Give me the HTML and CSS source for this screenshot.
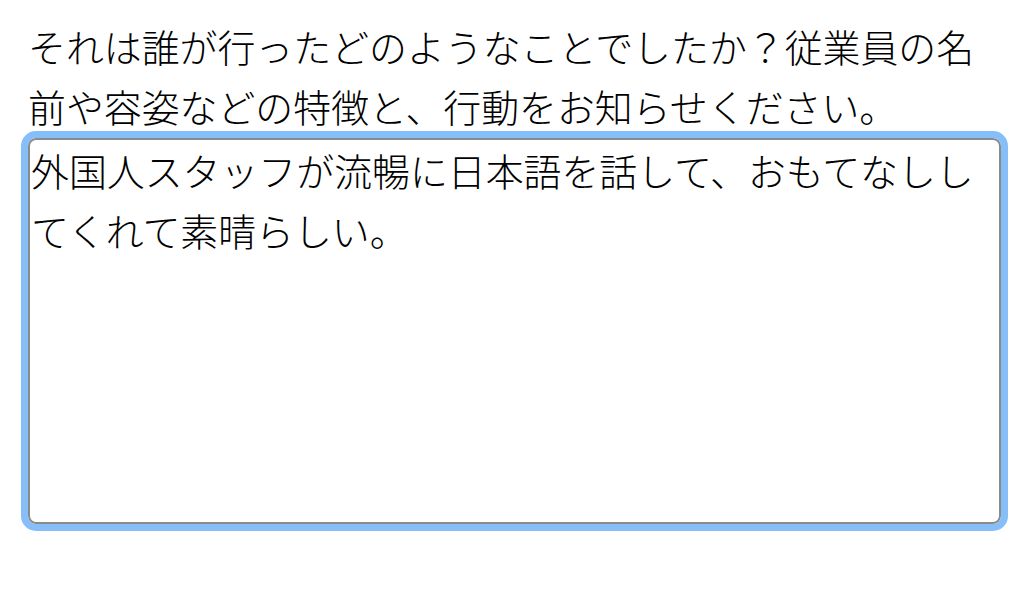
FILE: index.html
```html
<!DOCTYPE html>
<html lang="ja">
<head>
  <meta charset="UTF-8">
  <meta name="viewport" content="width=device-width, initial-scale=1.0">
  <title>アンケート</title>
  <link rel="stylesheet" href="styles.css">
</head>
<body>
  <div class="question">
    <label for="answer">それは誰が行ったどのようなことでしたか？従業員の名前や容姿などの特徴と、行動をお知らせください。</label>
    <textarea id="answer" class="answer">外国人スタッフが流暢に日本語を話して、おもてなししてくれて素晴らしい。</textarea>
  </div>
</body>
</html>
```

FILE: styles.css
```css
body {
  margin: 0;
  padding: 0;
  background-color: #fff;
  font-family: "Noto Sans CJK JP", "Noto Sans", sans-serif;
  color: #000;
}
.question {
  padding: 16px 23px 20px 28px;
  display: flex;
  flex-direction: column;
  gap: 2px;
}
.question label {
  font-size: 37.9px;
  font-weight: 300;
  line-height: 60px;
}
.answer {
  box-sizing: border-box;
  width: 973px;
  height: 386px;
  margin: 0;
  padding: 0 1px;
  border: 2px solid #8a8a8a;
  border-radius: 8px;
  outline: 7px solid #86befa;
  outline-offset: 0;
  resize: none;
  font-family: inherit;
  font-size: 37.9px;
  font-weight: 300;
  line-height: 60px;
  color: #000;
  background-color: #fff;
}
```
